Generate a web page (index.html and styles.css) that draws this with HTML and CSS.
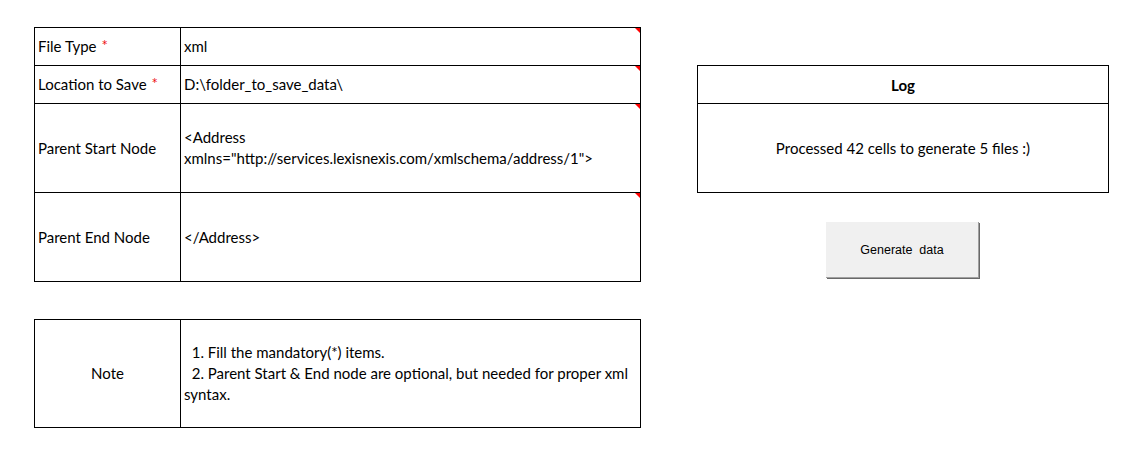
FILE: index.html
```html
<!DOCTYPE html>
<html>
<head>
<meta charset="utf-8">
<link rel="stylesheet" href="styles.css">
</head>
<body>
<div class="page">
  <div class="left">
    <div class="grid main">
      <div class="cell label r1">File Type <span class="req">*</span></div>
      <div class="cell value r1">xml<span class="flag"></span></div>
      <div class="cell label r1">Location to Save <span class="req">*</span></div>
      <div class="cell value r1">D:\folder_to_save_data\<span class="flag"></span></div>
      <div class="cell label r2">Parent Start Node</div>
      <div class="cell value r2">&lt;Address<br>xmlns="http://services.lexisnexis.com/xmlschema/address/1"&gt;<span class="flag"></span></div>
      <div class="cell label r2">Parent End Node</div>
      <div class="cell value r2">&lt;/Address&gt;<span class="flag"></span></div>
    </div>
    <div class="grid note">
      <div class="cell label center rn">Note</div>
      <div class="cell value rn">&nbsp;&nbsp;1. Fill the mandatory(*) items.<br>&nbsp;&nbsp;2. Parent Start &amp; End node are optional, but needed for proper xml syntax.</div>
    </div>
  </div>
  <div class="right">
    <div class="log">
      <div class="log-head">Log</div>
      <div class="log-body">Processed 42 cells to generate 5 files :)</div>
    </div>
    <button class="btn">Generate&nbsp; data</button>
  </div>
</div>
</body>
</html>
```
FILE: styles.css
```css
html, body {
  margin: 0;
  padding: 0;
  background: #ffffff;
}
body {
  font-family: "Lato", "Liberation Sans", sans-serif;
  font-size: 15px;
  color: #000000;
}
.page {
  display: flex;
  align-items: flex-start;
  padding: 27px 0 0 34px;
  gap: 56px;
}
.left {
  display: flex;
  flex-direction: column;
  gap: 37px;
}
.grid {
  display: grid;
  grid-template-columns: 146px 460px;
  border-top: 1px solid #000;
  border-left: 1px solid #000;
}
.cell {
  border-right: 1px solid #000;
  border-bottom: 1px solid #000;
  position: relative;
  line-height: 21px;
  box-sizing: border-box;
  display: flex;
  flex-direction: row;
  align-items: center;
  justify-content: flex-start;
}
.label {
  padding-left: 3px;
}
.label.center {
  justify-content: center;
  padding-left: 0;
}
.value {
  padding-left: 3px;
  display: block;
  align-content: center;
}
.r1 { height: 38px; }
.r2 { height: 89px; }
.rn { height: 108px; }
.req {
  color: #ee1111;
  margin-left: 5px;
  font-size: 15px;
  position: relative;
  top: -1px;
}
.flag {
  position: absolute;
  top: 0;
  right: 0;
  width: 0;
  height: 0;
  border-top: 5px solid #ff0000;
  border-left: 5px solid transparent;
}
.right {
  margin-top: 38px;
  display: flex;
  flex-direction: column;
  align-items: center;
  gap: 29px;
}
.log {
  width: 412px;
  border: 1px solid #000;
  box-sizing: border-box;
}
.log-head {
  height: 38px;
  border-bottom: 1px solid #000;
  box-sizing: border-box;
  font-weight: bold;
  display: flex;
  align-items: center;
  justify-content: center;
}
.log-body {
  height: 88px;
  display: flex;
  align-items: center;
  justify-content: center;
}
.btn {
  width: 153px;
  height: 56px;
  background: #f0f0f0;
  border: none;
  border-right: 1px solid #a0a0a0;
  border-bottom: 1px solid #a0a0a0;
  box-shadow: 1px 1px 0 #696969;
  font-family: "Liberation Sans", Arial, sans-serif;
  font-size: 12.5px;
  color: #000;
  padding: 0;
  margin-left: -1px;
}
```
